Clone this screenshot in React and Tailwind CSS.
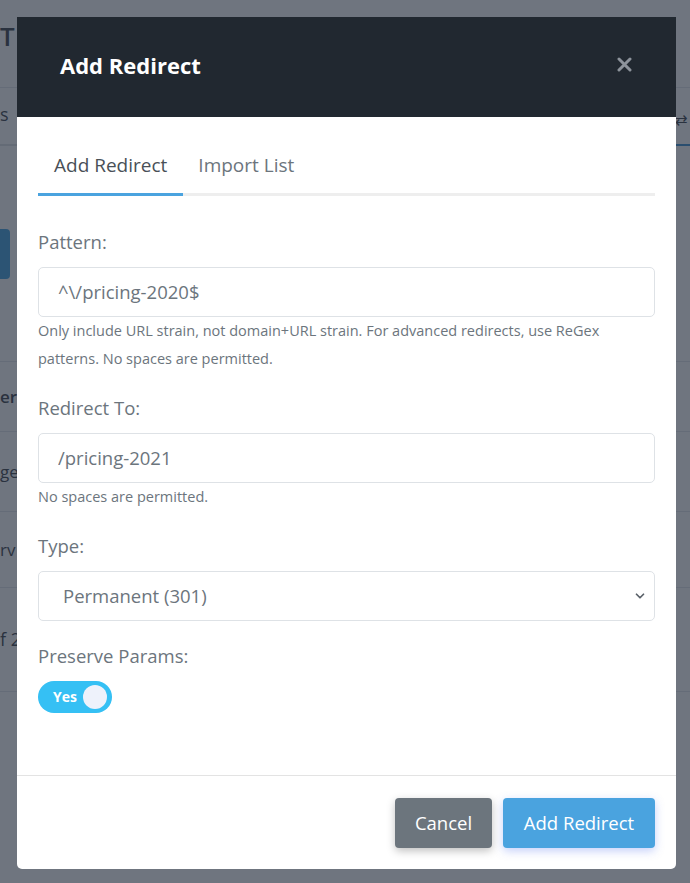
import { ChevronDown } from 'lucide-react'

// Page behind the modal: only its left and right edges peek out.
function BackgroundPage() {
  return (
    <div className="h-[883px] overflow-hidden bg-white font-['Open_Sans',sans-serif] text-[#3b4148]">
      <div className="flex h-[88px] items-center border-b border-[#e3e6ea] pb-[14px]">
        <span className="text-[26px] font-semibold tracking-wide">TI</span>
      </div>
      <div className="flex h-[58px] items-end justify-between border-b-2 border-[#dee2e6]">
        <span className="mb-[16px] text-[18px]">s</span>
        <span className="mb-[-2px] border-b-2 border-[#3b8fd0] pb-[14px] pl-[4px] pr-[2px] text-[15px]">⇄</span>
      </div>
      <div className="flex h-[216px] flex-col justify-center border-b border-[#e3e6ea]">
        <div className="h-[50px] w-[10px] rounded-r bg-[#3fa0e0]" />
      </div>
      <div className="flex h-[70px] items-center border-b border-[#e3e6ea]">
        <span className="text-[17px] font-semibold">ern</span>
      </div>
      <div className="flex h-[80px] items-center border-b border-[#e3e6ea]">
        <span className="text-[17px]">ge</span>
      </div>
      <div className="flex h-[76px] items-center border-b border-[#e3e6ea]">
        <span className="text-[17px]">rv</span>
      </div>
      <div className="flex h-[104px] items-center border-b border-[#e3e6ea]">
        <span className="text-[18px]">f 2</span>
      </div>
    </div>
  )
}

function Field({ label, children, help }) {
  return (
    <div>
      <label className="mb-3 block text-[18.5px] leading-[27px] text-[#6c757d]">{label}</label>
      {children}
      {help && <p className="text-[14.5px] leading-[28px] text-[#6c757d]">{help}</p>}
    </div>
  )
}

export default function App() {
  return (
    <div className="relative h-[883px] w-[690px] overflow-hidden">
      <BackgroundPage />

      <div className="absolute inset-0 bg-[#222b3a]/65 font-['Open_Sans',sans-serif]">
        <div className="ml-[17px] mt-[17px] w-[659px] overflow-hidden rounded-b-[5px] bg-white">
          <div className="flex h-[100px] items-center justify-between bg-[#212830] pl-[43px] pr-[44px]">
            <h2 className="mb-[4px] text-[22px] font-bold text-white">Add Redirect</h2>
            <button className="mb-[6px] text-[#8d939b]">
              <svg width="15" height="15" viewBox="0 0 15 15">
                <path d="M2 2 L13 13 M13 2 L2 13" stroke="currentColor" strokeWidth="3" strokeLinecap="round" />
              </svg>
            </button>
          </div>

          <div className="px-[21px] pb-[62px] pt-[28px]">
            <div className="flex border-b-[3px] border-[#eeeeee] text-[19px]">
              <div className="mb-[-3px] border-b-[3px] border-[#4aa3df] px-4 pb-[13px] pt-[6px] text-[#495057]">
                Add Redirect
              </div>
              <div className="pb-[13px] pl-[15px] pt-[6px] text-[#6c757d]">Import List</div>
            </div>

            <div className="mt-[32px] flex flex-col gap-[21px]">
              <Field
                label="Pattern:"
                help="Only include URL strain, not domain+URL strain. For advanced redirects, use ReGex patterns. No spaces are permitted."
              >
                <input
                  defaultValue="^\/pricing-2020$"
                  className="h-[50px] w-full rounded-[5px] border border-[#dee2e6] px-[19px] text-[18.5px] text-[#6c757d] outline-none"
                />
              </Field>

              <Field label="Redirect To:" help="No spaces are permitted.">
                <input
                  defaultValue="/pricing-2021"
                  className="h-[50px] w-full rounded-[5px] border border-[#dee2e6] px-[19px] text-[18.5px] text-[#6c757d] outline-none"
                />
              </Field>

              <Field label="Type:">
                <div className="flex h-[50px] w-full items-center justify-between rounded-[5px] border border-[#dee2e6] pl-[24px] pr-[7px] text-[18.5px] text-[#6c757d]">
                  <span>Permanent (301)</span>
                  <ChevronDown size={14} strokeWidth={3} className="text-[#5a6169]" />
                </div>
              </Field>

              <Field label="Preserve Params:">
                <div className="flex h-[32px] w-[74px] items-center justify-between rounded-full bg-[#35c0f4] pl-[15px] pr-[5px]">
                  <span className="text-[14px] font-bold text-white">Yes</span>
                  <span className="h-[24px] w-[24px] rounded-full bg-[#eef2fb]" />
                </div>
              </Field>
            </div>
          </div>

          <div className="flex justify-end gap-[11px] border-t border-[#e3e3e3] px-[21px] pb-[21px] pt-[22px]">
            <button className="h-[50px] w-[97px] rounded-[4px] bg-[#6c757d] text-[18.5px] text-white shadow-[0_3px_8px_rgba(0,0,0,0.25)]">
              Cancel
            </button>
            <button className="h-[50px] w-[152px] rounded-[4px] bg-[#4aa3df] text-[18.5px] text-white shadow-[0_3px_10px_rgba(90,120,240,0.35)]">
              Add Redirect
            </button>
          </div>
        </div>
      </div>
    </div>
  )
}
